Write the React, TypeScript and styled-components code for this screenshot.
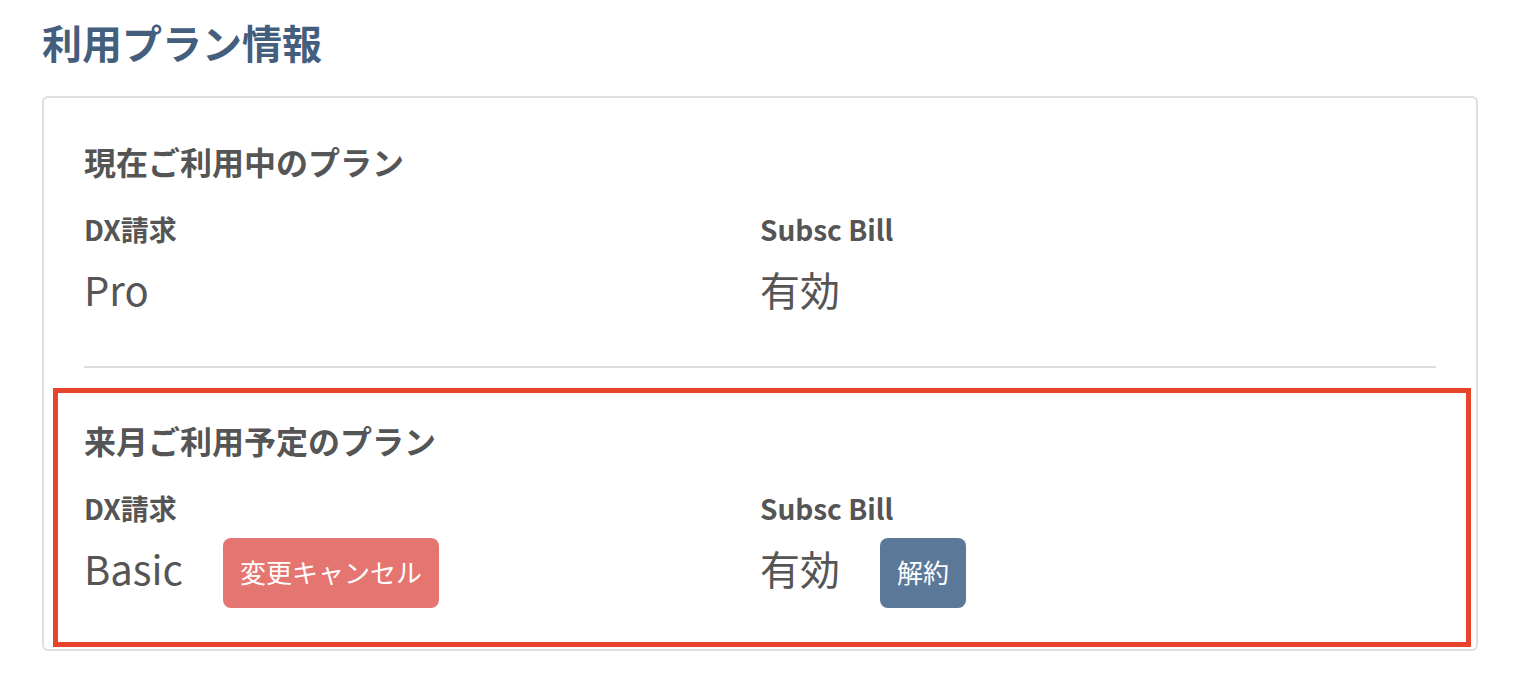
import React from "react";
import styled, { createGlobalStyle } from "styled-components";

const GlobalStyle = createGlobalStyle`
  html, body {
    margin: 0;
    padding: 0;
    background: #ffffff;
  }
  body {
    font-family: "Noto Sans CJK JP", "Noto Sans", sans-serif;
    color: #555555;
  }
`;

const Page = styled.div`
  padding: 14px 54px 40px 42px;
`;

const Title = styled.h1`
  margin: 0 0 26px 0;
  font-size: 40px;
  line-height: 56px;
  font-weight: 700;
  color: #445e7e;
`;

const Card = styled.div`
  border: 2px solid #dedede;
  border-radius: 6px;
  padding: 11px 5px 2px 9px;
  background: #fff;
`;

const Section = styled.section<{ $highlighted?: boolean }>`
  display: grid;
  grid-template-columns: 1fr 1fr;
  border-style: solid;
  border-color: ${(p) => (p.$highlighted ? "#e8432b" : "transparent")};
  border-width: ${(p) => (p.$highlighted ? "5px" : "5px 5px 0 5px")};
  padding: 27px 30px ${(p) => (p.$highlighted ? "34px" : "0")} 26px;
`;

const SectionHeading = styled.h2`
  grid-column: 1 / -1;
  margin: 0 0 30px 0;
  font-size: 32px;
  line-height: 40px;
  font-weight: 700;
  color: #555555;
`;

const Column = styled.div`
  display: flex;
  flex-direction: column;
  gap: 12px;
`;

const Label = styled.div`
  font-size: 28px;
  line-height: 36px;
  font-weight: 700;
  color: #555555;
`;

const ValueRow = styled.div`
  display: flex;
  align-items: center;
  gap: 40px;
  height: 70px;
`;

const Value = styled.span`
  font-size: 40px;
  line-height: 56px;
  margin-bottom: 10px;
  font-weight: 400;
  color: #555555;
`;

const ActionButton = styled.button<{ $variant: "danger" | "primary" }>`
  height: 70px;
  padding: 0 17px 2px 17px;
  border: none;
  border-radius: 8px;
  font-family: "Noto Sans CJK JP", "Noto Sans", sans-serif;
  font-size: 26px;
  line-height: 36px;
  color: #ffffff;
  background: ${(p) => (p.$variant === "danger" ? "#e47571" : "#5b7899")};
  cursor: pointer;
`;

const Divider = styled.hr`
  margin: 37px 35px 20px 31px;
  height: 2px;
  border: none;
  background: #dddddd;
`;

type Plan = {
  label: string;
  value: string;
  action?: { text: string; variant: "danger" | "primary" };
};

const current: Plan[] = [
  { label: "DX請求", value: "Pro" },
  { label: "Subsc Bill", value: "有効" },
];

const next: Plan[] = [
  { label: "DX請求", value: "Basic", action: { text: "変更キャンセル", variant: "danger" } },
  { label: "Subsc Bill", value: "有効", action: { text: "解約", variant: "primary" } },
];

const PlanColumns = ({ plans }: { plans: Plan[] }) => (
  <>
    {plans.map((p) => (
      <Column key={p.label}>
        <Label>{p.label}</Label>
        <ValueRow>
          <Value>{p.value}</Value>
          {p.action && (
            <ActionButton $variant={p.action.variant}>{p.action.text}</ActionButton>
          )}
        </ValueRow>
      </Column>
    ))}
  </>
);

export default function App() {
  return (
    <>
      <GlobalStyle />
      <Page>
        <Title>利用プラン情報</Title>
        <Card>
          <Section>
            <SectionHeading>現在ご利用中のプラン</SectionHeading>
            <PlanColumns plans={current} />
          </Section>
          <Divider />
          <Section $highlighted>
            <SectionHeading>来月ご利用予定のプラン</SectionHeading>
            <PlanColumns plans={next} />
          </Section>
        </Card>
      </Page>
    </>
  );
}
